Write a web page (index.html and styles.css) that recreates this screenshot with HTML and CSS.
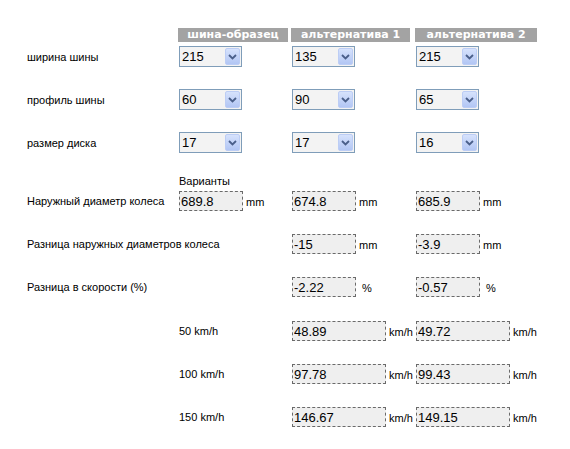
FILE: index.html
```html
<!DOCTYPE html>
<html lang="ru">
<head>
    <meta charset="UTF-8">
    <title>Шинный калькулятор</title>
    <link rel="stylesheet" href="styles.css">
</head>
<body>
    <div class="calc">
        <div class="row head">
            <div></div>
            <div class="th th1">шина-образец</div>
            <div class="th th2">альтернатива 1</div>
            <div class="th th3">альтернатива 2</div>
        </div>

        <div class="row sel-row first">
            <div class="label">ширина шины</div>
            <div class="cell"><div class="combo"><select><option>215</option></select><span class="btn"><svg width="9" height="6" viewBox="0 0 9 6"><polyline points="1,1 4.5,4.5 8,1" fill="none" stroke="#4a5f8a" stroke-width="1.8"/></svg></span></div></div>
            <div class="cell"><div class="combo"><select><option>135</option></select><span class="btn"><svg width="9" height="6" viewBox="0 0 9 6"><polyline points="1,1 4.5,4.5 8,1" fill="none" stroke="#4a5f8a" stroke-width="1.8"/></svg></span></div></div>
            <div class="cell"><div class="combo"><select><option>215</option></select><span class="btn"><svg width="9" height="6" viewBox="0 0 9 6"><polyline points="1,1 4.5,4.5 8,1" fill="none" stroke="#4a5f8a" stroke-width="1.8"/></svg></span></div></div>
        </div>

        <div class="row sel-row">
            <div class="label">профиль шины</div>
            <div class="cell"><div class="combo"><select><option>60</option></select><span class="btn"><svg width="9" height="6" viewBox="0 0 9 6"><polyline points="1,1 4.5,4.5 8,1" fill="none" stroke="#4a5f8a" stroke-width="1.8"/></svg></span></div></div>
            <div class="cell"><div class="combo"><select><option>90</option></select><span class="btn"><svg width="9" height="6" viewBox="0 0 9 6"><polyline points="1,1 4.5,4.5 8,1" fill="none" stroke="#4a5f8a" stroke-width="1.8"/></svg></span></div></div>
            <div class="cell"><div class="combo"><select><option>65</option></select><span class="btn"><svg width="9" height="6" viewBox="0 0 9 6"><polyline points="1,1 4.5,4.5 8,1" fill="none" stroke="#4a5f8a" stroke-width="1.8"/></svg></span></div></div>
        </div>

        <div class="row sel-row">
            <div class="label">размер диска</div>
            <div class="cell"><div class="combo"><select><option>17</option></select><span class="btn"><svg width="9" height="6" viewBox="0 0 9 6"><polyline points="1,1 4.5,4.5 8,1" fill="none" stroke="#4a5f8a" stroke-width="1.8"/></svg></span></div></div>
            <div class="cell"><div class="combo"><select><option>17</option></select><span class="btn"><svg width="9" height="6" viewBox="0 0 9 6"><polyline points="1,1 4.5,4.5 8,1" fill="none" stroke="#4a5f8a" stroke-width="1.8"/></svg></span></div></div>
            <div class="cell"><div class="combo"><select><option>16</option></select><span class="btn"><svg width="9" height="6" viewBox="0 0 9 6"><polyline points="1,1 4.5,4.5 8,1" fill="none" stroke="#4a5f8a" stroke-width="1.8"/></svg></span></div></div>
        </div>

        <div class="row caption">
            <div></div>
            <div class="cell">Варианты</div>
        </div>

        <div class="row out-row tight">
            <div class="label">Наружный диаметр колеса</div>
            <div class="cell"><input class="out" value="689.8" readonly><span class="unit">mm</span></div>
            <div class="cell"><input class="out" value="674.8" readonly><span class="unit">mm</span></div>
            <div class="cell"><input class="out" value="685.9" readonly><span class="unit">mm</span></div>
        </div>

        <div class="row out-row">
            <div class="label wide">Разница наружных диаметров колеса</div>
            <div class="cell"></div>
            <div class="cell"><input class="out" value="-15" readonly><span class="unit">mm</span></div>
            <div class="cell"><input class="out" value="-3.9" readonly><span class="unit">mm</span></div>
        </div>

        <div class="row out-row">
            <div class="label">Разница в скорости (%)</div>
            <div class="cell"></div>
            <div class="cell"><input class="out" value="-2.22" readonly><span class="unit pct">%</span></div>
            <div class="cell"><input class="out" value="-0.57" readonly><span class="unit pct">%</span></div>
        </div>

        <div class="row out-row speed">
            <div></div>
            <div class="cell label">50 km/h</div>
            <div class="cell"><input class="out long" value="48.89" readonly><span class="unit">km/h</span></div>
            <div class="cell"><input class="out long" value="49.72" readonly><span class="unit">km/h</span></div>
        </div>

        <div class="row out-row">
            <div></div>
            <div class="cell label">100 km/h</div>
            <div class="cell"><input class="out long" value="97.78" readonly><span class="unit">km/h</span></div>
            <div class="cell"><input class="out long" value="99.43" readonly><span class="unit">km/h</span></div>
        </div>

        <div class="row out-row">
            <div></div>
            <div class="cell label">150 km/h</div>
            <div class="cell"><input class="out long" value="146.67" readonly><span class="unit">km/h</span></div>
            <div class="cell"><input class="out long" value="149.15" readonly><span class="unit">km/h</span></div>
        </div>
    </div>
</body>
</html>
```

FILE: styles.css
```css
body {
    margin: 0;
    background-color: white;
    font-family: "Liberation Sans", Arial, sans-serif;
    font-size: 11px;
    color: #000;
}
.calc {
    margin-left: 8px;
    padding-top: 28px;
}
.row {
    display: grid;
    grid-template-columns: 170px 113px 124px 125px;
    align-items: center;
}
.head {
    height: 14px;
}
.th {
    height: 14px;
    line-height: 14px;
    background-color: #a3a3a3;
    color: white;
    font-family: "DejaVu Sans", Verdana, sans-serif;
    font-weight: bold;
    font-size: 11px;
    text-align: center;
    white-space: nowrap;
}
.th1 { width: 110px; }
.th2 { width: 119px; }
.th3 { width: 122px; }
.label {
    padding-left: 19px;
    white-space: nowrap;
}
.cell {
    padding-left: 1px;
    display: flex;
    align-items: baseline;
    white-space: nowrap;
}
.cell.label {
    padding-left: 1px;
}
.sel-row {
    height: 21px;
    margin-top: 22px;
}
.sel-row.first {
    margin-top: 4px;
}
.combo {
    position: relative;
    width: 61px;
    height: 19px;
    border: 1px solid #7f9db9;
    background-color: #f3f3f3;
}
.combo select {
    -webkit-appearance: none;
    appearance: none;
    border: none;
    background: transparent;
    width: 100%;
    height: 19px;
    padding: 0 0 0 2px;
    margin: 0;
    font-family: "Liberation Sans", Arial, sans-serif;
    font-size: 13px;
    color: #000;
    outline: none;
}
.btn {
    position: absolute;
    top: 1px;
    right: 1px;
    width: 15px;
    height: 17px;
    box-sizing: border-box;
    border: 1px solid #bccdf5;
    border-radius: 2px;
    background: linear-gradient(#d6e2fc, #b2c6f4);
    display: flex;
    align-items: center;
    justify-content: center;
}
.caption {
    height: 13px;
    margin-top: 21px;
}
.out-row {
    height: 20px;
    margin-top: 23px;
}
.out-row.tight {
    margin-top: 4px;
}
.out-row.speed {
    margin-top: 24px;
}
.out {
    box-sizing: border-box;
    width: 64px;
    height: 20px;
    margin: 0;
    padding: 0 0 0 1px;
    border: 1px dashed #6a6a6a;
    background-color: #efefef;
    font-family: "Liberation Sans", Arial, sans-serif;
    font-size: 13px;
    color: #000;
    outline: none;
}
.out.long {
    width: 94px;
}
.unit {
    margin-left: 3px;
    font-size: 11px;
}
.unit.pct {
    margin-left: 6px;
}
```
